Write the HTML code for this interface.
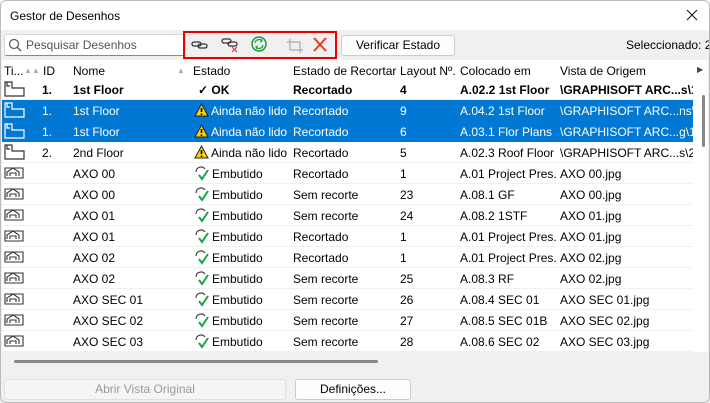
<!DOCTYPE html><html><head><style>
*{box-sizing:border-box;margin:0;padding:0}
body{width:710px;height:403px;overflow:hidden;background:#f0f0f0;font-family:"Liberation Sans",sans-serif;font-size:12px;color:#000;position:relative}
.a{position:absolute;white-space:nowrap}
.row{position:absolute;left:2px;width:691px;height:21px;border-bottom:1px solid #f0f0f0;background:#fff;overflow:hidden}
.row span{position:absolute;top:4px;white-space:nowrap;overflow:hidden}
.sel{background:#0078d4;color:#fff;border-bottom-color:#0078d4}
.b{font-weight:bold}
.hd span{position:absolute;top:4px}
</style></head><body>
<div class="a" style="left:0;top:0;width:710px;height:30px;background:#fff"></div>
<div class="a" style="left:10px;top:9px;font-size:12px">Gestor de Desenhos</div>
<svg class="a" style="left:686px;top:9px" width="12" height="12"><path d="M1 1L11 11M11 1L1 11" stroke="#222" stroke-width="1.2"/></svg>
<div class="a" style="left:4px;top:34px;width:182px;height:22px;background:#fff;border:1px solid #d8d8d8;border-bottom-color:#888;border-radius:3px"></div>
<svg class="a" style="left:8px;top:38px" width="14" height="14"><circle cx="6" cy="6" r="4.5" fill="none" stroke="#555" stroke-width="1.2"/><path d="M9.3 9.3L13 13" stroke="#555" stroke-width="1.3"/></svg>
<div class="a" style="left:26px;top:38px;color:#555">Pesquisar Desenhos</div>
<div class="a" style="left:183px;top:31px;width:154px;height:28px;border:2px solid #e00"></div>
<svg class="a" style="left:190px;top:36px" width="145" height="18">
<g fill="none" stroke="#333" stroke-width="1.3"><rect x="2" y="6" width="9" height="4" rx="2"/><rect x="8" y="8" width="9" height="4" rx="2"/></g>
<g fill="none" stroke="#333" stroke-width="1.3"><rect x="32" y="3" width="9" height="4" rx="2"/><rect x="38" y="6" width="9" height="4" rx="2"/></g><path d="M42 11l5 5M47 11l-5 5" stroke="#e33" stroke-width="1.2"/>
<circle cx="69" cy="8" r="7" fill="none" stroke="#1a9c3e" stroke-width="1.5"/><path d="M65 7a4 4 0 0 1 7-2M73 9a4 4 0 0 1-7 2M71 3l1 2-2 1M67 13l-1-2 2-1" fill="none" stroke="#1a9c3e" stroke-width="1.2"/>
<path d="M100 3v11h13M97 6h13v11" fill="none" stroke="#aaa" stroke-width="1.2"/>
<path d="M124 2l12 13M136 2l-12 13" stroke="#f03a17" stroke-width="2"/>
</svg>
<div class="a" style="left:341px;top:35px;width:114px;height:21px;background:#fdfdfd;border:1px solid #ccc;border-radius:3px;text-align:center;line-height:19px">Verificar Estado</div>
<div class="a" style="left:626px;top:38px">Seleccionado: 2</div>
<div class="a" style="left:2px;top:60px;width:706px;height:292px;background:#fff"></div>
<div class="row hd" style="top:60px;height:20px;border:0">
<span style="left:2px">Ti...</span><span style="left:22px;color:#aaa;font-size:8px;top:6px">▲▲</span>
<span style="left:41px">ID</span><span style="left:71px">Nome</span><span style="left:175px;color:#aaa;font-size:8px;top:6px">▲</span>
<span style="left:191px">Estado</span><span style="left:291px;width:104px">Estado de Recortar</span><span style="left:398px">Layout Nº.</span><span style="left:458px">Colocado em</span><span style="left:558px">Vista de Origem</span>
</div>
<div class="a" style="left:697px;top:65px;font-size:8px;color:#444">▶</div>
<div class="a" style="left:702px;top:95px;width:3px;height:52px;background:#888;border-radius:2px"></div>
<div id="rows"></div>
<div class="a" style="left:14px;top:360px;width:364px;height:3px;background:#888;border-radius:2px"></div>
<div class="a" style="left:4px;top:379px;width:282px;height:21px;background:#f5f5f5;border:1px solid #e0e0e0;border-radius:3px;text-align:center;line-height:19px;color:#999">Abrir Vista Original</div>
<div class="a" style="left:295px;top:379px;width:116px;height:21px;background:#fdfdfd;border:1px solid #ccc;border-radius:3px;text-align:center;line-height:19px">Definições...</div>
<div class="a" style="left:0;top:0;width:710px;height:403px;border:1px solid #bbb;border-radius:6px"></div>
<script>
var F='<svg width="22" height="16" style="position:absolute;left:2px;top:2px"><path d="M1 1h7v6h12v8H1z M3 1v4h3" fill="none" stroke="C" stroke-width="1.2"/></svg>';
var H='<svg width="22" height="16" style="position:absolute;left:2px;top:2px"><path d="M1 3h18v10H1z M3 11V7l6-4 6 4v4 M6 11V8h6v3" fill="none" stroke="#333" stroke-width="1.1"/></svg>';
var W='<svg width="15" height="14" style="position:absolute;left:192px;top:3px"><path d="M7.5 1L14 13H1z" fill="#fcd116" stroke="#222" stroke-width="1"/><path d="M7.5 5v4M7.5 10.5v1.5" stroke="#000" stroke-width="1.6"/></svg>';
var E='<svg width="16" height="16" style="position:absolute;left:192px;top:2px"><path d="M2 7a5 5 0 0 1 9-3" fill="none" stroke="#333" stroke-width="1.1"/><path d="M5 10l3 4 6-9" fill="none" stroke="#1aa34a" stroke-width="2"/></svg>';
var d=[
['F','1.','1st Floor','ok','Recortado','4','A.02.2 1st Floor','\\GRAPHISOFT ARC...s\\1. 1',''],
['F','1.','1st Floor','w','Recortado','9','A.04.2 1st Floor','\\GRAPHISOFT ARC...ns\\1.','sel'],
['F','1.','1st Floor','w','Recortado','6','A.03.1 Flor Plans','\\GRAPHISOFT ARC...g\\1. 1','sel'],
['F','2.','2nd Floor','w','Recortado','5','A.02.3 Roof Floor','\\GRAPHISOFT ARC...s\\2. 2r',''],
['H','','AXO 00','e','Recortado','1','A.01 Project Pres...','AXO 00.jpg',''],
['H','','AXO 00','e','Sem recorte','23','A.08.1 GF','AXO 00.jpg',''],
['H','','AXO 01','e','Sem recorte','24','A.08.2 1STF','AXO 01.jpg',''],
['H','','AXO 01','e','Recortado','1','A.01 Project Pres...','AXO 01.jpg',''],
['H','','AXO 02','e','Recortado','1','A.01 Project Pres...','AXO 02.jpg',''],
['H','','AXO 02','e','Sem recorte','25','A.08.3 RF','AXO 02.jpg',''],
['H','','AXO SEC 01','e','Sem recorte','26','A.08.4 SEC 01','AXO SEC 01.jpg',''],
['H','','AXO SEC 02','e','Sem recorte','27','A.08.5 SEC 01B','AXO SEC 02.jpg',''],
['H','','AXO SEC 03','e','Sem recorte','28','A.08.6 SEC 02','AXO SEC 03.jpg','']];
var h='';d.forEach(function(r,i){var s=r[8]=='sel';var cl='row'+(s?' sel':'')+(i==0?' b':'');
var ic=r[0]=='F'?F.replace('C',s?'#fff':'#333'):H;
var st=r[3]=='ok'?'<span style="left:196px">✓ OK</span>':r[3]=='w'?W+'<span style="left:209px;width:79px">Ainda não lido</span>':E+'<span style="left:210px">Embutido</span>';
h+='<div class="'+cl+'" style="top:'+(79+i*21)+'px;">'+ic+'<span style="left:40px">'+r[1]+'</span><span style="left:71px">'+r[2]+'</span>'+st+'<span style="left:291px">'+r[4]+'</span><span style="left:398px">'+r[5]+'</span><span style="left:458px;width:97px">'+r[6]+'</span><span style="left:558px;width:133px">'+r[7]+'</span></div>';});
document.getElementById('rows').innerHTML=h;
</script>
</body></html>
